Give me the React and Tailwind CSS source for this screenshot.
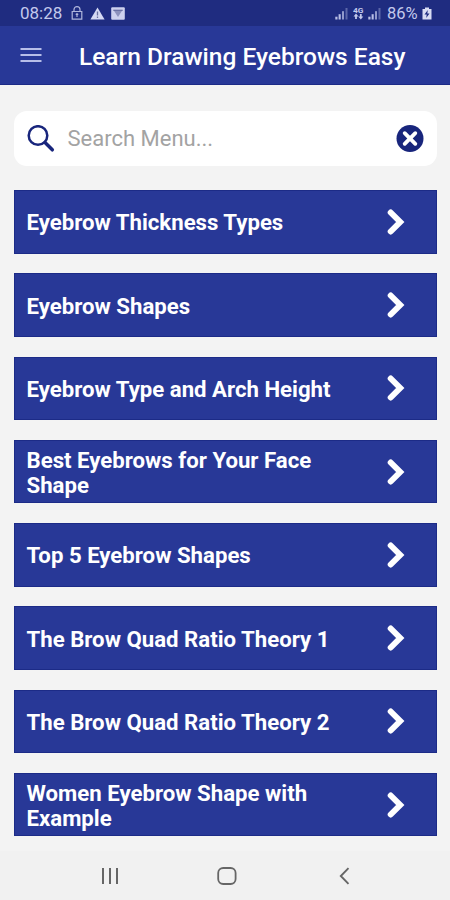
const menuItems = [
  'Eyebrow Thickness Types',
  'Eyebrow Shapes',
  'Eyebrow Type and Arch Height',
  'Best Eyebrows for Your Face Shape',
  'Top 5 Eyebrow Shapes',
  'The Brow Quad Ratio Theory 1',
  'The Brow Quad Ratio Theory 2',
  'Women Eyebrow Shape with Example',
];

function Signal() {
  return (
    <svg width="13" height="13" viewBox="0 0 13 13" fill="#b9bfe6">
      <rect x="0.3" y="9.7" width="2.2" height="2.8" />
      <rect x="3.6" y="7.2" width="2.1" height="5.3" />
      <rect x="7" y="4.2" width="2" height="8.3" opacity="0.75" />
      <rect x="10.5" y="1" width="2" height="11.5" opacity="0.4" />
    </svg>
  );
}

function StatusBar() {
  return (
    <div className="flex h-[26px] shrink-0 items-center justify-between bg-[#1f2c80] pl-[20px] pr-[18px] text-[#c3c9ec]">
      <div className="flex items-center">
        <span className="w-[51px] text-[17px] leading-[26px]">08:28</span>
        <svg width="12" height="14" viewBox="0 0 12 14" fill="none" stroke="#b0b6dc" strokeWidth="1.2">
          <path d="M1.2 5.5h9.600v7.700H1.200Z" />
          <path d="M3 5.200V3.600a3 3 0 0 1 6 0V5.200M6 7v4M4.700 8.300h2.600" />
        </svg>
        <svg className="ml-[7px]" width="15" height="13" viewBox="0 0 15 13">
          <path d="M7.500 0.500 14.600 12.500H0.400Z" fill="#d5d9f3" />
          <path d="M7.500 4.500v4M7.500 9.600v1.400" stroke="#68709f" strokeWidth="1.300" />
        </svg>
        <svg className="ml-[6px]" width="14" height="13" viewBox="0 0 14 13">
          <rect x="0.200" y="0.200" width="13.600" height="12.600" rx="1" fill="#cdd1ee" />
          <path d="M2.800 3.500h8.400L7 10Z" fill="#8d92bd" />
          <path d="M2.300 3.300h9.400" stroke="#626a9f" strokeWidth="1.200" />
        </svg>
      </div>
      <div className="flex items-center">
        <Signal />
        <svg className="ml-[5px]" width="11" height="14" viewBox="0 0 11 14">
          <text x="0" y="6.500" fontSize="8" fontWeight="700" fill="#c3c9ec" textLength="10.500" lengthAdjust="spacingAndGlyphs">4G</text>
          <path d="M0.500 10.500 3 7.500l2.500 3H3.900V13H2.100v-2.500ZM5.300 10.500 7.800 13.500l2.500-3H8.700V8H6.900v2.500Z" fill="#c3c9ec" />
        </svg>
        <span className="ml-[4px] flex"><Signal /></span>
        <span className="ml-[6px] w-[35px] whitespace-nowrap pt-px text-[16.500px] leading-[25px]">86%</span>
        <svg width="10" height="13" viewBox="0 0 10 13">
          <path d="M3 0.500h4v1.500h2.500v10.500h-9V2H3Z" fill="#d8dcf3" />
          <path d="M5.800 3 2.500 7.500h2.200L4.200 11l3.300-4.500H5.300Z" fill="#1f2c80" />
        </svg>
      </div>
    </div>
  );
}

function Header() {
  return (
    <header className="flex h-[59px] shrink-0 items-center border-b border-[#1c2a86] bg-[#283897] pl-[20px]">
      <svg width="22" height="16" viewBox="0 0 22 16" stroke="#b7bee9" strokeWidth="2">
        <path d="M0.500 2h21M0.500 8h21M0.500 14h21" />
      </svg>
      <h1 className="ml-[37px] whitespace-nowrap pt-[3px] text-[24.500px] font-medium leading-[30px] text-white">
        Learn Drawing Eyebrows Easy
      </h1>
    </header>
  );
}

function SearchBar() {
  return (
    <div className="flex h-[55px] shrink-0 items-center rounded-[13px] bg-white pl-[13px] pr-[13px]">
      <svg width="28" height="28" viewBox="0 0 28 28" fill="none" stroke="#18257c">
        <circle cx="11" cy="10.500" r="9.300" strokeWidth="2.500" />
        <path d="m18 17.500 7.300 7.300" strokeWidth="3.500" strokeLinecap="round" />
      </svg>
      <span className="ml-[13px] flex-1 pt-px text-[22px] leading-[28px] text-[#a3a3a3]">Search Menu...</span>
      <svg width="28" height="28" viewBox="0 0 28 28">
        <circle cx="14" cy="13.500" r="13.500" fill="#18257c" />
        <path d="m8.700 8.200 10.600 10.600m0-10.600-10.600 10.600" stroke="#fff" strokeWidth="3.800" strokeLinecap="round" />
      </svg>
    </div>
  );
}

function MenuRow({ label }) {
  return (
    <button className="flex h-[63.500px] w-full shrink-0 items-center justify-between border border-[#1c2b87] bg-[#283897] pl-[12px] pr-[31px] text-left">
      <span className="w-[320px] pt-[2px] text-[22.200px] font-bold leading-[25px] text-white">{label}</span>
      <svg width="18" height="26" viewBox="0 0 18 26" fill="none" stroke="#fff" strokeWidth="6">
        <path d="M3.700 3.500 13.200 13 3.700 22.500" strokeLinecap="round" strokeLinejoin="miter" />
      </svg>
    </button>
  );
}

function NavBar() {
  return (
    <nav className="flex h-[49px] shrink-0 items-center bg-[#f1f1f1] pl-[101px]">
      <svg width="18" height="18" viewBox="0 0 18 18" stroke="#666" strokeWidth="2">
        <path d="M2 1v16M9 1v16M16 1v16" />
      </svg>
      <svg className="ml-[98px]" width="20" height="18" viewBox="0 0 20 18" fill="none" stroke="#666" strokeWidth="1.800">
        <rect x="1.200" y="1" width="17.400" height="16" rx="5" />
      </svg>
      <svg className="ml-[102px]" width="11" height="18" viewBox="0 0 11 18" fill="none" stroke="#666" strokeWidth="1.900">
        <path d="M9.500 1.200 1.800 9l7.700 7.800" />
      </svg>
    </nav>
  );
}

export default function App() {
  return (
    <div className="flex h-[900px] w-[450px] flex-col overflow-hidden bg-[#f3f3f3] font-['Roboto',sans-serif]">
      <StatusBar />
      <Header />
      <main className="flex min-h-0 flex-1 flex-col px-[13.500px] pt-[26px]">
        <SearchBar />
        <div className="mt-[24.200px] flex flex-col gap-[19.750px]">
          {menuItems.map((label) => (
            <MenuRow key={label} label={label} />
          ))}
        </div>
      </main>
      <NavBar />
    </div>
  );
}
